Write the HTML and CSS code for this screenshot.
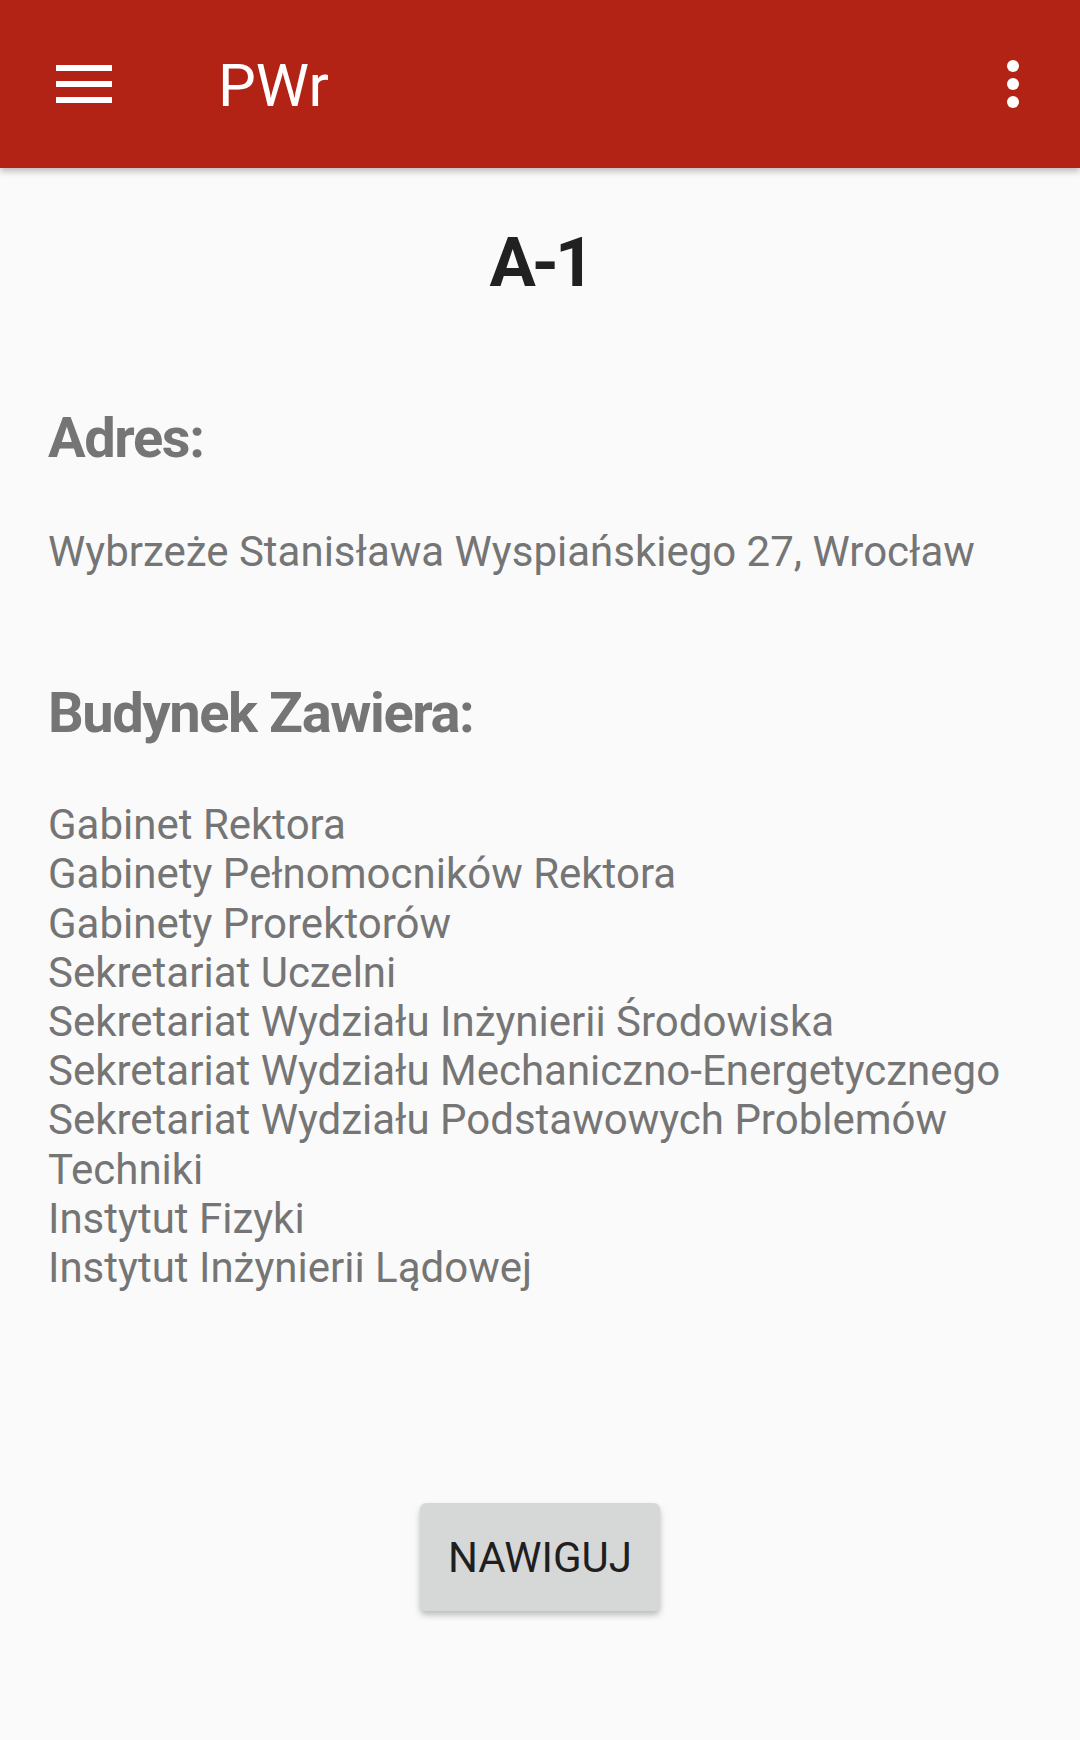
FILE: index.html
```html
<!DOCTYPE html>
<html lang="pl">
<head>
<meta charset="utf-8">
<title>PWr</title>
<link rel="stylesheet" href="styles.css">
</head>
<body>
<header class="toolbar">
  <div class="menu-icon">
    <svg width="56" height="38" viewBox="0 0 56 38"><rect x="0" y="0" width="56" height="6" fill="#fff"/><rect x="0" y="16" width="56" height="6" fill="#fff"/><rect x="0" y="32" width="56" height="6" fill="#fff"/></svg>
  </div>
  <div class="toolbar-title">PWr</div>
  <div class="overflow-icon">
    <svg width="12" height="48" viewBox="0 0 12 48"><circle cx="6" cy="6" r="6" fill="#fff"/><circle cx="6" cy="24" r="6" fill="#fff"/><circle cx="6" cy="42" r="6" fill="#fff"/></svg>
  </div>
</header>
<main class="content">
  <h1 class="building">A-1</h1>
  <h2 class="section-title address-title">Adres:</h2>
  <p class="text address">Wybrzeże Stanisława Wyspiańskiego 27, Wrocław</p>
  <h2 class="section-title contains-title">Budynek Zawiera:</h2>
  <p class="text list">Gabinet Rektora<br>Gabinety Pełnomocników Rektora<br>Gabinety Prorektorów<br>Sekretariat Uczelni<br>Sekretariat Wydziału Inżynierii Środowiska<br>Sekretariat Wydziału Mechaniczno-Energetycznego<br>Sekretariat Wydziału Podstawowych Problemów Techniki<br>Instytut Fizyki<br>Instytut Inżynierii Lądowej</p>
  <div class="actions">
    <button class="nav-button">NAWIGUJ</button>
  </div>
</main>
</body>
</html>
```
FILE: styles.css
```css
html, body {
  margin: 0;
  padding: 0;
}
body {
  width: 1080px;
  height: 1740px;
  background: #FAFAFA;
  font-family: Roboto, "Noto Sans", sans-serif;
  overflow: hidden;
}
.toolbar {
  height: 168px;
  background: #B22316;
  display: flex;
  align-items: center;
  box-shadow: 0 3px 7px rgba(0,0,0,0.28);
  position: relative;
  z-index: 1;
}
.menu-icon {
  margin-left: 56px;
  width: 56px;
  height: 38px;
  display: flex;
}
.toolbar-title {
  margin-left: 106px;
  color: #fff;
  font-size: 60px;
  line-height: 70px;
  padding-top: 4px;
  flex: 1;
}
.overflow-icon {
  margin-right: 61px;
  width: 12px;
  height: 48px;
  display: flex;
}
.content {
  padding: 0 48px;
  display: flex;
  flex-direction: column;
}
.building {
  margin: 54px 0 0;
  text-align: center;
  font-size: 69px;
  line-height: 81px;
  font-weight: 700;
  color: #212121;
  letter-spacing: -4px;
}
.section-title {
  margin: 0;
  font-size: 56px;
  line-height: 66px;
  font-weight: 700;
  color: #757575;
  letter-spacing: -1.4px;
}
.address-title {
  margin-top: 102px;
}
.contains-title {
  margin-top: 104px;
}
.text {
  margin: 0;
  font-size: 42px;
  line-height: 49.2px;
  color: #757575;
}
.address {
  margin-top: 56px;
}
.list {
  margin-top: 54px;
}
.actions {
  display: flex;
  justify-content: center;
  margin-top: 211px;
}
.nav-button {
  width: 240px;
  height: 108px;
  border: none;
  border-radius: 6px;
  background: #D6D7D7;
  color: #1F1F1F;
  font-family: Roboto, "Noto Sans", sans-serif;
  font-size: 42px;
  font-weight: 400;
  padding: 0;
  box-shadow: 0 4px 6px rgba(0,0,0,0.25);
}
```
